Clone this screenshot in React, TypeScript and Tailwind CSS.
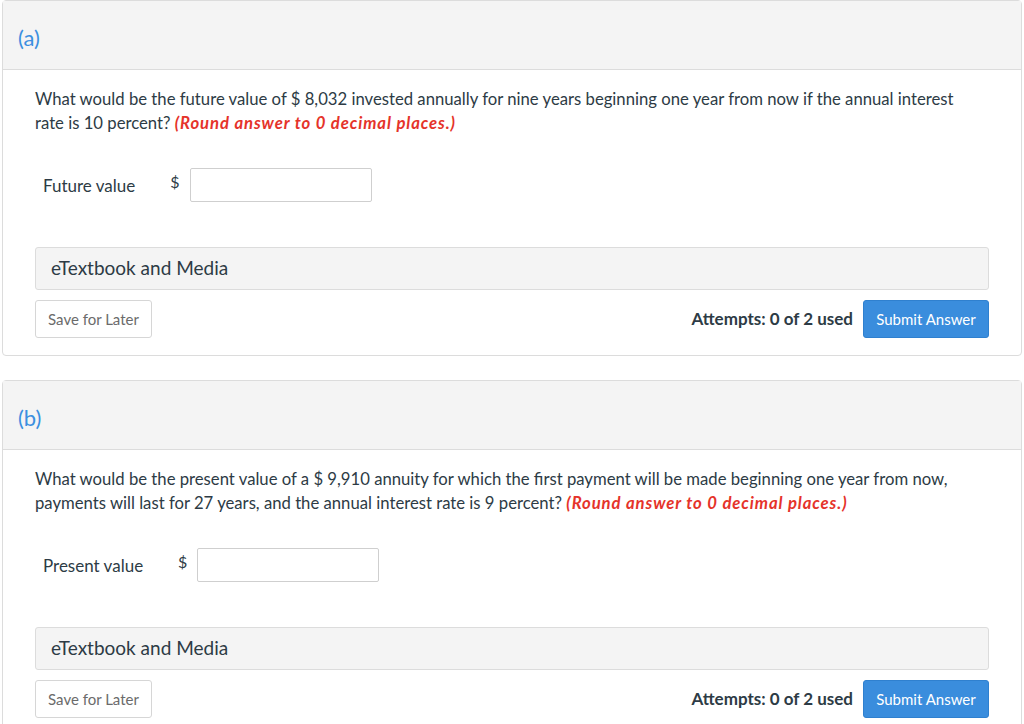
import React from "react";

type Part = {
  label: string;
  question: string;
  field: string;
};

const parts: Part[] = [
  {
    label: "(a)",
    question:
      "What would be the future value of $ 8,032 invested annually for nine years beginning one year from now if the annual interest rate is 10 percent?",
    field: "Future value",
  },
  {
    label: "(b)",
    question:
      "What would be the present value of a $ 9,910 annuity for which the first payment will be made beginning one year from now, payments will last for 27 years, and the annual interest rate is 9 percent?",
    field: "Present value",
  },
];

function PartCard({ part }: { part: Part }) {
  return (
    <section className="ml-[2px] w-[1020px] rounded-[4px] border border-[#dcdcdc] bg-white">
      <div className="flex h-[69px] items-center border-b border-[#dcdcdc] bg-[#f4f4f4] px-[15px] pt-[6px]">
        <span className="text-[22px] leading-none text-[#3b8fe0]">{part.label}</span>
      </div>
      <div className="px-[32px] pb-[17px] pt-[17px]">
        <p className="pr-[20px] text-[16.7px] leading-6 text-[#2d3b45]">
          {part.question}{" "}
          <span className="font-bold italic tracking-[0.9px] text-[#e5332a]">
            (Round answer to 0 decimal places.)
          </span>
        </p>

        <div className="mt-[33px] flex items-center pl-[8px]">
          <span className="translate-y-[1px] text-[17px] text-[#2d3b45]">{part.field}</span>
          <span className="ml-[35px] -translate-y-[3px] text-[16px] text-[#2d3b45]">$</span>
          <input
            type="text"
            className="ml-[10px] h-[34px] w-[182px] rounded-[2px] border border-[#cfcfcf] bg-white px-2 outline-none"
          />
        </div>

        <div className="mt-[45px] flex h-[43px] items-center rounded-[3px] border border-[#dcdcdc] bg-[#f4f4f4] px-[15px]">
          <span className="text-[19px] text-[#2d3b45]">eTextbook and Media</span>
        </div>

        <div className="mt-[10px] flex items-center">
          <button
            type="button"
            className="h-[38px] w-[117px] rounded-[3px] border border-[#d6d6d6] bg-white text-[15px] text-[#6b6b6b]"
          >
            Save for Later
          </button>
          <div className="flex-1" />
          <span className="text-[17px] font-bold text-[#2d3b45]">Attempts: 0 of 2 used</span>
          <button
            type="button"
            className="ml-[10px] h-[38px] w-[126px] rounded-[3px] border border-[#2f80cf] bg-[#3a8ddd] text-[15px] text-white"
          >
            Submit Answer
          </button>
        </div>
      </div>
    </section>
  );
}

export default function App() {
  return (
    <div
      className="h-[724px] w-[1024px] overflow-hidden bg-white"
      style={{ fontFamily: "Lato, 'Noto Sans', sans-serif" }}
    >
      <div className="flex flex-col gap-[24px]">
        {parts.map((p) => (
          <PartCard key={p.label} part={p} />
        ))}
      </div>
    </div>
  );
}
